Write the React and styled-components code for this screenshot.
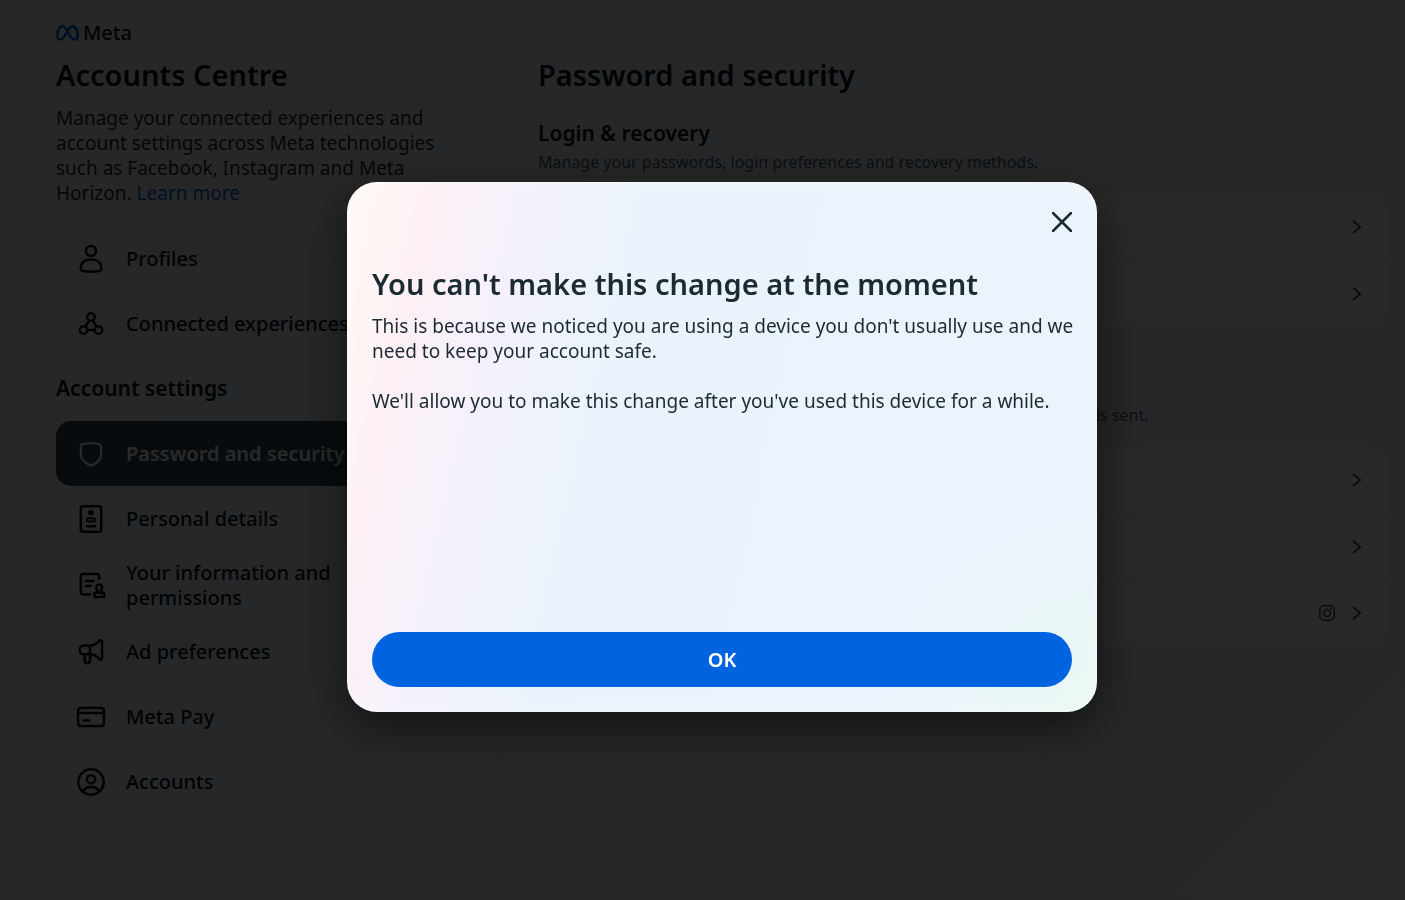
import React from 'react'
import styled, { createGlobalStyle, css } from 'styled-components'

const GlobalStyle = createGlobalStyle`
    * {
        box-sizing: border-box;
    }
    body {
        margin: 0;
        font-family: 'Noto Sans', sans-serif;
        color: #0a1317;
        background: #ecf2f8;
    }
    h1, h2, h3, p, ul {
        margin: 0;
        padding: 0;
    }
`

const strokeProps = {
    fill: 'none',
    stroke: 'currentColor',
    strokeWidth: 2.5,
    strokeLinecap: 'round',
    strokeLinejoin: 'round',
}

const ProfileIcon = () => (
    <NavIcon viewBox="0 0 30 30" {...strokeProps}>
        <circle cx="15" cy="7" r="5" />
        <path d="M4.800 23.600c0-5.400 4.600-8.200 10.200-8.200s10.200 2.800 10.200 8.200v1.200c0 1.300-.7 2-2 2.300-4.900.8-11.500.8-16.400 0-1.300-.3-2-1-2-2.300z" />
    </NavIcon>
)

const ConnectedIcon = () => (
    <NavIcon viewBox="0 0 30 30" {...strokeProps}>
        <circle cx="15" cy="8" r="3.800" />
        <circle cx="7.500" cy="21" r="3.800" />
        <circle cx="22.500" cy="21" r="3.800" />
        <path d="M13.200 11.600 9.400 17.600M16.800 11.600l3.800 6M11.400 21h7.200" />
    </NavIcon>
)

const ShieldIcon = () => (
    <NavIcon viewBox="0 0 30 30" {...strokeProps} strokeWidth="2.200">
        <path d="M15 4c3.600 0 6.800.6 9 1.600.8.400 1.200 1 1.200 1.900v7.300c0 6-4.700 9.500-9.300 11.500-.6.200-1.200.2-1.800 0C9.500 24.300 4.800 20.800 4.800 14.800V7.500c0-.9.4-1.500 1.200-1.900 2.200-1 5.400-1.600 9-1.600z" />
    </NavIcon>
)

const DetailsIcon = () => (
    <NavIcon viewBox="0 0 30 30" {...strokeProps}>
        <rect x="4.800" y="2.200" width="20.400" height="25.600" rx="2" />
        <circle cx="15" cy="8.800" r="2.700" fill="currentColor" stroke="none" />
        <rect x="11" y="14.200" width="8" height="3.200" rx="1.600" strokeWidth="2" />
        <path d="M11 22.300h8" />
    </NavIcon>
)

const PermissionsIcon = () => (
    <NavIcon viewBox="0 0 30 30" {...strokeProps}>
        <path d="M14 24.500H7a2.200 2.200 0 0 1-2.200-2.200V6.200A2.200 2.200 0 0 1 7 4h14a2.200 2.200 0 0 1 2.200 2.200V9" />
        <path d="M10 11h7.500M10 16h4.500" />
        <path d="M21.400 22v-1.800c-.9-.8-1.200-1.600-1.200-2.700a3 3 0 0 1 6 0c0 1.100-.3 1.900-1.200 2.700V22M18.400 22.800h9.600v4.200h-9.600z" />
    </NavIcon>
)

const MegaphoneIcon = () => (
    <NavIcon viewBox="0 0 30 30" {...strokeProps}>
        <path d="M14 8.500v8.800H8a4.400 4.400 0 0 1 0-8.800zM14 8.500c4 0 7-2 9.600-4.900.9-1 2.500-.5 2.500.9v16.900c0 1.400-1.600 1.900-2.500.9C21 19.300 18 17.300 14 17.300" />
        <path d="M8.700 17.300v6.200a2.600 2.600 0 0 0 5.300 0v-6.200" />
    </NavIcon>
)

const CardIcon = () => (
    <NavIcon viewBox="0 0 30 30" {...strokeProps}>
        <path d="M4.500 6c7-.4 14-.4 21 0 1.300.1 2.200.9 2.300 2.200.3 4.600.3 9 0 13.600-.1 1.300-1 2.200-2.300 2.200h-21c-1.300 0-2.200-.9-2.300-2.200-.3-4.600-.3-9 0-13.600C2.300 6.900 3.200 6.100 4.500 6z" />
        <path d="M2.200 11h25.600M7.500 18.500h5.500" />
    </NavIcon>
)

const AccountsIcon = () => (
    <NavIcon viewBox="0 0 30 30" {...strokeProps}>
        <circle cx="15" cy="15" r="12.700" />
        <circle cx="15" cy="12.300" r="4.100" />
        <path d="M7.300 25c.9-3.400 4-5 7.700-5s6.800 1.600 7.700 5" />
    </NavIcon>
)

const mainItems = [
    { label: 'Profiles', icon: ProfileIcon },
    { label: 'Connected experiences', icon: ConnectedIcon },
]

const settingItems = [
    { label: 'Password and security', icon: ShieldIcon, active: true },
    { label: 'Personal details', icon: DetailsIcon },
    { label: 'Your information and permissions', icon: PermissionsIcon },
    { label: 'Ad preferences', icon: MegaphoneIcon },
    { label: 'Meta Pay', icon: CardIcon },
    { label: 'Accounts', icon: AccountsIcon },
]

const sections = [
    {
        title: 'Login & recovery',
        text: 'Manage your passwords, login preferences and recovery methods.',
        rows: [{ label: 'Change password' }, { label: 'Two-factor authentication' }],
    },
    {
        title: 'Security checks',
        text: 'Review security issues by running checks across all apps, devices and emails sent.',
        rows: [
            { label: "Where you're logged in" },
            { label: 'Login alerts' },
            { label: 'Recent emails', instagram: true },
        ],
    },
]

const NavList = ({ items }) => (
    <List>
        {items.map(({ label, icon: Icon, active }) => (
            <li key={label}>
                <NavLink href="#" $active={active}>
                    <Icon />
                    <span>{label}</span>
                </NavLink>
            </li>
        ))}
    </List>
)

const App = () => (
    <>
        <GlobalStyle />
        <Page>
            <Sidebar>
                <Brand>
                    <BrandMark viewBox="0 0 23 16">
                        <path
                            d="M1.300 10.600C1.300 6 3.400 1.300 6.600 1.300c5 0 6.400 13.200 11.700 13.200 2.300 0 3.400-1.600 3.400-4.200 0-4.500-2.200-9-5.300-9C11.500 1.300 9.400 14.500 4.600 14.500c-2.100 0-3.300-1.500-3.300-3.900z"
                            fill="none"
                            stroke="#0064e0"
                            strokeWidth="2.600"
                        />
                    </BrandMark>
                    Meta
                </Brand>
                <Heading>Accounts Centre</Heading>
                <Intro>
                    Manage your connected experiences and account settings across Meta
                    technologies such as Facebook, Instagram and Meta Horizon.{' '}
                    <a href="#">Learn more</a>
                </Intro>
                <NavList items={mainItems} />
                <GroupTitle>Account settings</GroupTitle>
                <NavList items={settingItems} />
            </Sidebar>
            <Content>
                <Heading>Password and security</Heading>
                {sections.map(section => (
                    <Section key={section.title}>
                        <SectionTitle>{section.title}</SectionTitle>
                        <SectionText>{section.text}</SectionText>
                        <Card>
                            {section.rows.map(row => (
                                <Row key={row.label} type="button" aria-label={row.label}>
                                    {row.instagram && (
                                        <InstagramIcon
                                            viewBox="0 0 16 16"
                                            {...strokeProps}
                                            strokeWidth="1.500"
                                        >
                                            <rect x=".8" y=".8" width="14.400" height="14.400" rx="4" />
                                            <circle cx="8" cy="8" r="3.400" />
                                            <circle cx="12.200" cy="3.800" r=".4" />
                                        </InstagramIcon>
                                    )}
                                    <Chevron
                                        viewBox="0 0 10 14"
                                        {...strokeProps}
                                        strokeWidth="1.800"
                                        strokeLinecap="butt"
                                        strokeLinejoin="miter"
                                    >
                                        <path d="M1 .8 8.200 7 1 13.200" />
                                    </Chevron>
                                </Row>
                            ))}
                        </Card>
                    </Section>
                ))}
            </Content>
        </Page>
        <Overlay>
            <Dialog role="dialog" aria-modal="true" aria-labelledby="dialog-title">
                <CloseButton type="button" aria-label="Close">
                    <svg width="20" height="20" viewBox="0 0 20 20" {...strokeProps}>
                        <path d="M1 1l18 18M19 1 1 19" />
                    </svg>
                </CloseButton>
                <DialogTitle id="dialog-title">You can't make this change at the moment</DialogTitle>
                <DialogText>
                    This is because we noticed you are using a device you don't usually use and we
                    need to keep your account safe.
                </DialogText>
                <DialogText>
                    We'll allow you to make this change after you've used this device for a while.
                </DialogText>
                <OkButton type="button">OK</OkButton>
            </Dialog>
        </Overlay>
    </>
)

const Page = styled.div`
    display: flex;
    height: 100vh;
    overflow: hidden;
    background: linear-gradient(135deg, #f8f0f4 0, #f2f1f5 12%, #ecf2f8 28%, #ecf2f8 75%, #eef5f2 100%);
`

const Sidebar = styled.aside`
    flex: 0 0 498px;
    padding: 25px 40px 0 56px;
    border-right: 1px solid #dde2e8;
`

const Brand = styled.div`
    display: flex;
    align-items: center;
    gap: 4px;
    height: 15px;
    margin-bottom: 16px;
    font-size: 20px;
    font-weight: 500;
`

const BrandMark = styled.svg`
    width: 23px;
    height: 16px;
`

const Heading = styled.h1`
    font-size: 29px;
    line-height: 38px;
    font-weight: 600;
`

const Intro = styled.p`
    margin: 12px 0 20px;
    font-size: 19px;
    line-height: 25px;
    color: #1c2b33;
    a {
        color: #0064e0;
        text-decoration: none;
    }
`

const GroupTitle = styled.h2`
    margin: 20px 0;
    font-size: 21px;
    line-height: 25px;
    font-weight: 600;
`

const List = styled.ul`
    list-style: none;
`

const NavIcon = styled.svg`
    flex: none;
    width: 30px;
    height: 30px;
`

const NavLink = styled.a`
    display: flex;
    align-items: center;
    gap: 20px;
    min-height: 65px;
    padding: 9px 40px 9px 20px;
    border-radius: 15px;
    font-size: 20px;
    line-height: 25px;
    font-weight: 500;
    color: inherit;
    text-decoration: none;
    ${({ $active }) =>
        $active &&
        css`
            background: #344854;
            color: #fff;
            font-weight: 600;
        `}
`

const Content = styled.main`
    flex: 1;
    padding: 56px 18px 0 40px;
`

const Section = styled.section`
    margin-top: 25px;
    & + & {
        margin-top: 46px;
    }
`

const SectionTitle = styled.h2`
    font-size: 21px;
    line-height: 28px;
    font-weight: 600;
`

const SectionText = styled.p`
    margin: 5px 0 22px;
    font-size: 16px;
    line-height: 20px;
    color: #465a69;
`

const Card = styled.div`
    border-radius: 20px;
    background: #fff;
    overflow: hidden;
`

const Row = styled.button`
    display: flex;
    align-items: center;
    justify-content: flex-end;
    gap: 20px;
    width: 100%;
    height: 66px;
    padding: 0 25px;
    border: 0;
    background: none;
    color: #344854;
    & + & {
        border-top: 1px solid #d3d9e0;
    }
`

const InstagramIcon = styled.svg`
    width: 16px;
    height: 16px;
    margin-right: -3px;
`

const Chevron = styled.svg`
    width: 10px;
    height: 14px;
`

const Overlay = styled.div`
    position: fixed;
    inset: 0;
    display: flex;
    align-items: center;
    justify-content: center;
    padding: 0 0 6px 39px;
    background: rgba(0, 0, 0, 0.84);
`

const Dialog = styled.div`
    display: flex;
    flex-direction: column;
    width: 750px;
    max-width: 100%;
    min-height: 530px;
    padding: 25px;
    border-radius: 30px;
    color: #1c2b33;
    background: radial-gradient(circle at 100% 100%, #eaf8f3 0, rgba(234, 248, 243, 0) 220px),
        linear-gradient(103deg, #fffaf3 0, #fdf0f5 10%, #f3f1fc 22%, #eaf3fb 34%, #ebf3fd 100%);
    box-shadow: 0 15px 50px rgba(0, 0, 0, 0.6), inset 0 0 15px rgba(255, 255, 255, 0.5);
`

const CloseButton = styled.button`
    display: flex;
    align-self: flex-end;
    width: 20px;
    padding: 0;
    margin: 5px 0 33px;
    border: 0;
    background: none;
    color: inherit;
`

const DialogTitle = styled.h2`
    margin-bottom: 11px;
    font-size: 29px;
    line-height: 38px;
    font-weight: 600;
`

const DialogText = styled.p`
    margin: 0 -8px 25px 0;
    font-size: 19px;
    line-height: 25px;
`

const OkButton = styled.button`
    height: 55px;
    margin-top: auto;
    border: 0;
    border-radius: 28px;
    background: #0064e0;
    color: #fff;
    font-family: inherit;
    font-size: 20px;
    font-weight: 600;
`

export default App
